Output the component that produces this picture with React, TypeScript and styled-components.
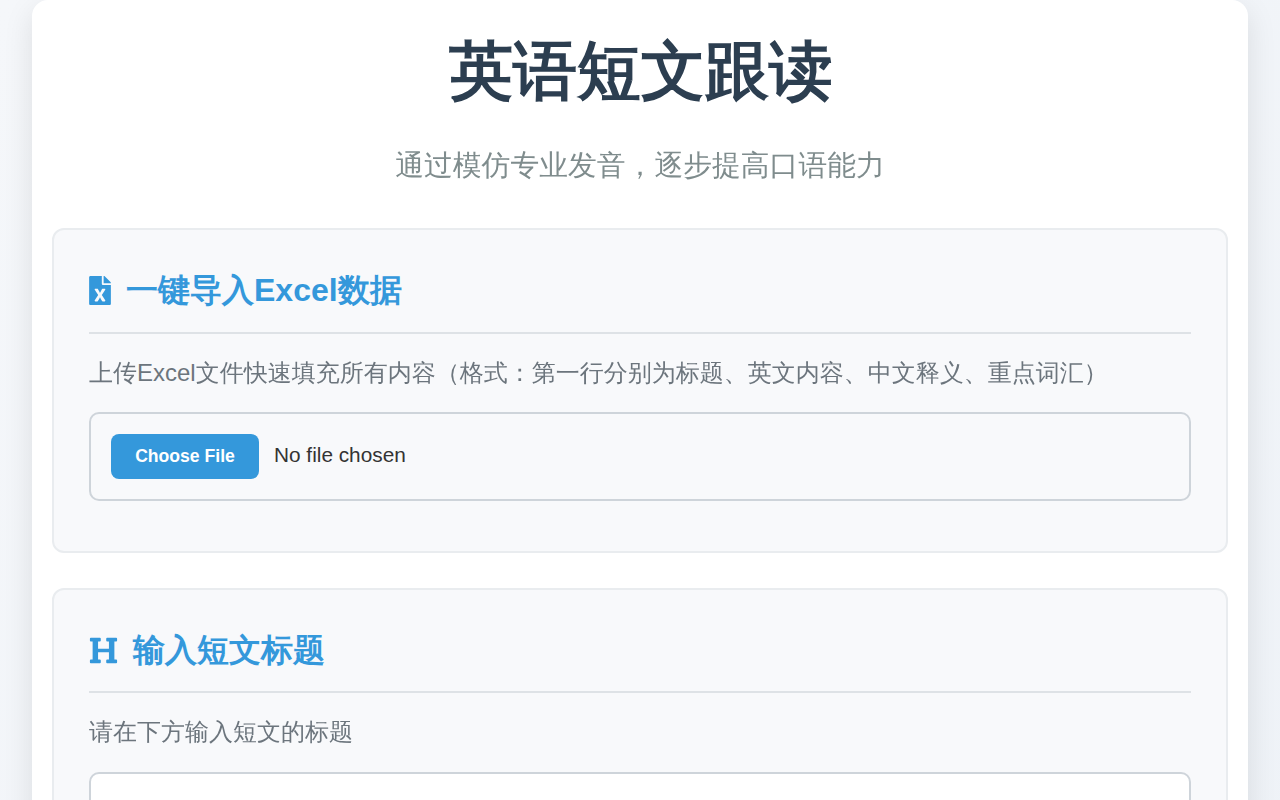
import { createGlobalStyle } from "styled-components";
import styled from "styled-components";
import { FaFileExcel, FaHeading } from "react-icons/fa";

const GlobalStyle = createGlobalStyle`
  html, body {
    margin: 0;
    padding: 0;
  }
  body {
    min-height: 100vh;
    background: linear-gradient(135deg, #f5f7fa 0%, #eef2f7 100%);
    font-family: "Liberation Sans", "WenQuanYi Zen Hei", "WenQuanYi Micro Hei", "Droid Sans Fallback", "Noto Sans CJK SC", sans-serif;
    color: #333;
  }
  * {
    box-sizing: border-box;
  }
`;

const Container = styled.div`
  width: 1216px;
  margin: 0 auto;
  padding: 0 20px 40px;
  background: #fff;
  border-radius: 16px;
  box-shadow: 0 10px 30px rgba(0, 0, 0, 0.1);
`;
const Header = styled.header`
  text-align: center;
  padding-top: 25px;
  margin-bottom: 42px;
`;
// bold headings use the system fallback so the CJK glyphs get a synthetic bold
const Title = styled.h1`
  margin: 0 0 27px;
  padding-left: 2px;
  font-family: "Liberation Sans", sans-serif;
  font-size: 64px;
  line-height: 92px;
  font-weight: 700;
  color: #2c3e50;
`;
const Subtitle = styled.p`
  margin: 0;
  font-size: 28.8px;
  line-height: 42px;
  color: #7f8c8d;
`;
const Section = styled.section`
  background: #f8f9fb;
  border: 2px solid #e9ecef;
  border-radius: 12px;
  padding: 35px 35px 50px;
  margin-bottom: 35px;
`;
const SectionTitle = styled.h2<{ $bottom: number; $iconWidth: number }>`
  display: flex;
  align-items: center;
  gap: 15px;
  margin: 0 0 21px;
  padding: 2px 0 ${(props) => props.$bottom}px;
  border-bottom: 2px solid #dee2e6;
  font-family: "Liberation Sans", sans-serif;
  font-size: 32px;
  line-height: 46px;
  font-weight: 700;
  color: #3498db;
  svg {
    flex: none;
    width: ${(props) => props.$iconWidth}px;
    height: 29px;
  }
`;
const Hint = styled.p<{ $gap: number }>`
  margin: 0 0 ${(props) => props.$gap}px;
  font-size: 24px;
  line-height: 35px;
  color: #6c757d;
`;
const FileBox = styled.div`
  display: flex;
  align-items: center;
  gap: 15px;
  height: 89px;
  padding: 0 20px;
  border: 2px solid #ced4da;
  border-radius: 10px;
`;
const ChooseButton = styled.button`
  width: 148px;
  height: 45px;
  padding: 0;
  border: 0;
  border-radius: 8px;
  background: #3498db;
  color: #fff;
  font: 700 17.6px "Liberation Sans", sans-serif;
`;
const FileName = styled.span`
  padding-bottom: 3px;
  font-size: 20.8px;
  color: #333;
`;
const TextInput = styled.div`
  height: 70px;
  border: 2px solid #ced4da;
  border-radius: 10px;
  background: #fff;
`;

export default function App() {
  return (
    <>
      <GlobalStyle />
      <Container>
        <Header>
          <Title>英语短文跟读</Title>
          <Subtitle>通过模仿专业发音，逐步提高口语能力</Subtitle>
        </Header>
        <Section>
          <SectionTitle $bottom={19} $iconWidth={22}>
            <FaFileExcel />
            一键导入Excel数据
          </SectionTitle>
          <Hint $gap={22}>上传Excel文件快速填充所有内容（格式：第一行分别为标题、英文内容、中文释义、重点词汇）</Hint>
          <FileBox>
            <ChooseButton>Choose File</ChooseButton>
            <FileName>No file chosen</FileName>
          </FileBox>
        </Section>
        <Section>
          <SectionTitle $bottom={18} $iconWidth={29}>
            <FaHeading />
            输入短文标题
          </SectionTitle>
          <Hint $gap={23}>请在下方输入短文的标题</Hint>
          <TextInput />
        </Section>
      </Container>
    </>
  );
}
